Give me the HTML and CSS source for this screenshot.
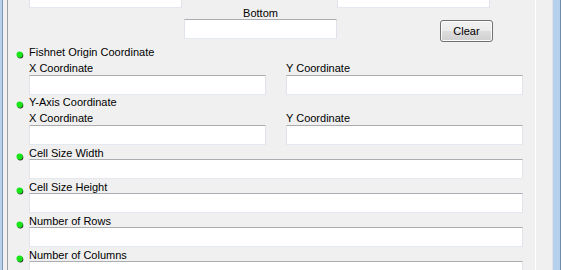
FILE: index.html
```html
<!DOCTYPE html>
<html lang="en">
<head>
    <meta charset="UTF-8">
    <title>Create Fishnet</title>
    <link rel="stylesheet" href="styles.css">
</head>
<body>
    <div class="window">
        <div class="frame-left"></div>
        <div class="panel">
            <div class="scroll">
                <!-- extent block, scrolled so that only its lower part shows -->
                <div class="extent">
                    <div class="extent-row">
                        <div class="box extent-box"></div>
                        <div class="box extent-box extent-right"></div>
                    </div>
                    <div class="extent-row">
                        <span class="extent-label">Bottom</span>
                    </div>
                    <div class="extent-row">
                        <div class="box extent-box extent-mid"></div>
                        <button class="btn">Clear</button>
                    </div>
                </div>

                <div class="field coord">
                    <svg class="dot" width="8" height="8" viewBox="0 0 8 8"><circle cx="4.3" cy="4.5" r="3" fill="#2a3a2a"/><circle cx="3.6" cy="3.6" r="3.1" fill="#19e619"/></svg>
                    <div class="field-body">
                        <div class="label title">Fishnet Origin Coordinate</div>
                        <div class="pair">
                            <div class="col">
                                <div class="label sub">X Coordinate</div>
                                <div class="box"></div>
                            </div>
                            <div class="col">
                                <div class="label sub">Y Coordinate</div>
                                <div class="box"></div>
                            </div>
                        </div>
                    </div>
                </div>

                <div class="field coord">
                    <svg class="dot" width="8" height="8" viewBox="0 0 8 8"><circle cx="4.3" cy="4.5" r="3" fill="#2a3a2a"/><circle cx="3.6" cy="3.6" r="3.1" fill="#19e619"/></svg>
                    <div class="field-body">
                        <div class="label title">Y-Axis Coordinate</div>
                        <div class="pair">
                            <div class="col">
                                <div class="label sub">X Coordinate</div>
                                <div class="box"></div>
                            </div>
                            <div class="col">
                                <div class="label sub">Y Coordinate</div>
                                <div class="box"></div>
                            </div>
                        </div>
                    </div>
                </div>

                <div class="field">
                    <svg class="dot single" width="8" height="8" viewBox="0 0 8 8"><circle cx="4.3" cy="4.5" r="3" fill="#2a3a2a"/><circle cx="3.6" cy="3.6" r="3.1" fill="#19e619"/></svg>
                    <div class="field-body">
                        <div class="label">Cell Size Width</div>
                        <div class="box"></div>
                    </div>
                </div>

                <div class="field">
                    <svg class="dot single" width="8" height="8" viewBox="0 0 8 8"><circle cx="4.3" cy="4.5" r="3" fill="#2a3a2a"/><circle cx="3.6" cy="3.6" r="3.1" fill="#19e619"/></svg>
                    <div class="field-body">
                        <div class="label">Cell Size Height</div>
                        <div class="box"></div>
                    </div>
                </div>

                <div class="field">
                    <svg class="dot single" width="8" height="8" viewBox="0 0 8 8"><circle cx="4.3" cy="4.5" r="3" fill="#2a3a2a"/><circle cx="3.6" cy="3.6" r="3.1" fill="#19e619"/></svg>
                    <div class="field-body">
                        <div class="label">Number of Rows</div>
                        <div class="box"></div>
                    </div>
                </div>

                <div class="field">
                    <svg class="dot single" width="8" height="8" viewBox="0 0 8 8"><circle cx="4.3" cy="4.5" r="3" fill="#2a3a2a"/><circle cx="3.6" cy="3.6" r="3.1" fill="#19e619"/></svg>
                    <div class="field-body">
                        <div class="label">Number of Columns</div>
                        <div class="box"></div>
                    </div>
                </div>
            </div>
        </div>
        <div class="frame-right"></div>
    </div>
</body>
</html>
```

FILE: styles.css
```css
body {
    margin: 0;
    background: #f0f0f0;
    font-family: "Liberation Sans", Arial, sans-serif;
    font-size: 11px;
    color: #000;
    overflow: hidden;
}
.window {
    display: flex;
    width: 561px;
    height: 270px;
    overflow: hidden;
}
.frame-left {
    flex: none;
    width: 7px;
    background: linear-gradient(to right, #b9d1ea 0 2px, #7b98b6 2px 3px, #f0f0f0 3px);
}
.panel {
    flex: none;
    width: 527px;
    border-left: 1px solid #a0a0a0;
    border-right: 1px solid #ffffff;
    overflow: hidden;
}
.frame-right {
    flex: none;
    width: 25px;
    background: linear-gradient(to right, #f0f0f0 0 16px, #dfe5ea 16px 17px, #b5d1ec 17px 24px, #6f8cab 24px);
}
.scroll {
    margin-top: -12px;
    padding-left: 21px;
    width: 494px;
}
.box {
    box-sizing: border-box;
    height: 20px;
    background: #fff;
    border-top: 1px solid #abadb3;
    border-left: 1px solid #e2e3ea;
    border-right: 1px solid #e2e3ea;
    border-bottom: 1px solid #e3e9ef;
}
.extent-row {
    display: flex;
    align-items: flex-start;
}
.extent-box {
    width: 153px;
}
.extent-right {
    margin-left: 155px;
}
.extent-mid {
    margin-left: 155px;
}
.extent-label {
    margin: -1px 0 0 155px;
    width: 153px;
    text-align: center;
    line-height: 12px;
}
.btn {
    box-sizing: border-box;
    margin: 1px 0 0 103px;
    width: 53px;
    height: 22px;
    padding: 0;
    font-family: inherit;
    font-size: 11px;
    color: #000;
    border: 1px solid #707070;
    border-radius: 3px;
    background: linear-gradient(to bottom, #f2f2f2 0, #ebebeb 50%, #dddddd 50%, #cfcfcf 100%);
    box-shadow: inset 0 0 0 1px #fcfcfc;
}
.extent {
    margin-bottom: 4px;
}
.field {
    display: flex;
    align-items: flex-start;
    margin-left: -13px;
}
.field + .field {
    margin-top: 2px;
}
.coord + .coord {
    margin-top: 1px;
}
.dot {
    flex: none;
    margin: 5px 5px 0 0;
}
.dot.single {
    margin-top: 6px;
}
.field-body {
    flex: 1;
}
.label {
    line-height: 12px;
    white-space: nowrap;
}
.title {
    margin-bottom: 4px;
}
.sub {
    margin-bottom: 1px;
}
.pair {
    display: grid;
    grid-template-columns: 237px 237px;
    column-gap: 20px;
}
```
